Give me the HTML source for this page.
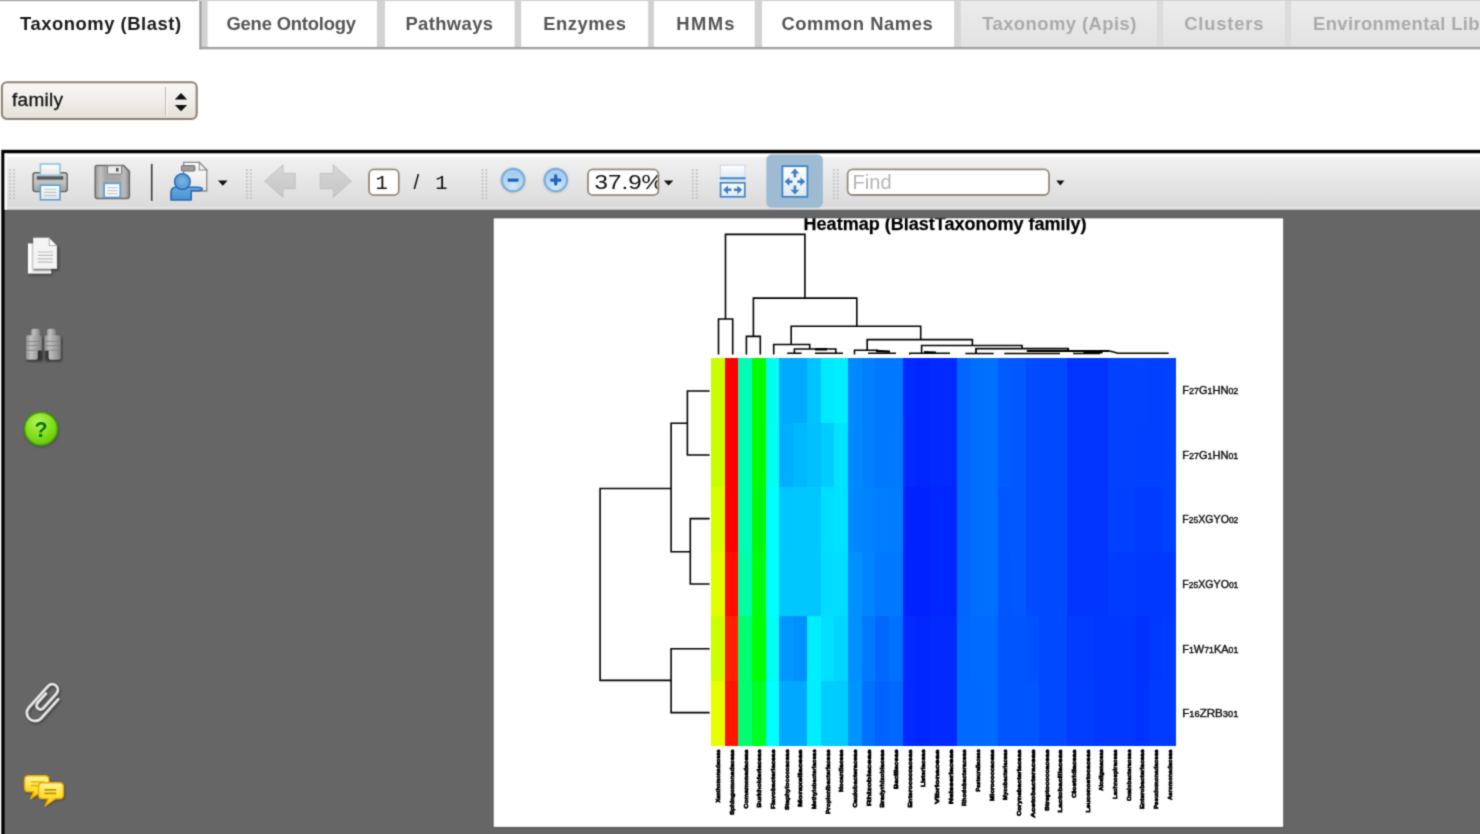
<!DOCTYPE html>
<html><head><meta charset="utf-8"><title>Heatmap</title>
<style>
html,body{margin:0;padding:0;background:#fff;width:1480px;height:834px;overflow:hidden;font-family:"Liberation Sans",sans-serif}
svg{display:block;overflow:visible}
#wrap{position:absolute;left:0;top:0;width:1480px;height:834px;overflow:hidden}
#soft{position:absolute;left:-30px;top:-30px;width:1540px;height:894px;background:#fff;filter:url(#softf)}
#inner{position:absolute;left:30px;top:30px;width:1480px;height:834px}
</style></head><body>
<svg width="0" height="0" style="position:absolute"><defs>
<filter id="softf" x="0" y="0" width="100%" height="100%" color-interpolation-filters="sRGB"><feConvolveMatrix order="3" kernelMatrix="1 4 1 4 16 4 1 4 1" divisor="36" edgeMode="duplicate" preserveAlpha="true"/></filter>
</defs></svg>
<div id="wrap"><div id="soft"><div id="inner">
<svg style="position:absolute;left:0;top:0" width="1480" height="52" viewBox="0 0 1480 52"><defs><linearGradient id="offg" x1="0" y1="0" x2="0" y2="1"><stop offset="0" stop-color="#ececec"/><stop offset="1" stop-color="#e2e2e2"/></linearGradient><linearGradient id="sepg" x1="0" y1="0" x2="1" y2="0"><stop offset="0" stop-color="#c6c6c6"/><stop offset="0.5" stop-color="#d6d6d6"/><stop offset="1" stop-color="#cbcbcb"/></linearGradient></defs><rect x="199.6" y="0" width="1290" height="47.2" fill="url(#sepg)"/><rect x="199.6" y="0" width="1290" height="47.2" fill="#d2d2d2"/><rect x="0.0" y="0" width="199.6" height="50" fill="#fff"/><rect x="207.6" y="0" width="169.3" height="47.2" fill="#fff"/><rect x="384.9" y="0" width="129.7" height="47.2" fill="#fff"/><rect x="521.2" y="0" width="126.9" height="47.2" fill="#fff"/><rect x="654.0" y="0" width="100.7" height="47.2" fill="#fff"/><rect x="761.9" y="0" width="192.4" height="47.2" fill="#fff"/><rect x="960.5" y="0" width="196.8" height="47.2" fill="url(#offg)"/><rect x="1162.7" y="0" width="122.3" height="47.2" fill="url(#offg)"/><rect x="1290.8" y="0" width="199.2" height="47.2" fill="url(#offg)"/><rect x="1157.3" y="1" width="5.4" height="46.2" fill="#dcdcdc"/><rect x="1285" y="1" width="5.8" height="46.2" fill="#dcdcdc"/><rect x="954.3" y="1" width="6.2" height="46.2" fill="#d6d6d6"/><rect x="199.6" y="46.9" width="1290" height="2.4" fill="#a2a2a2"/><rect x="199.4" y="0.5" width="2.1" height="48.8" fill="#9c9c9c"/><rect x="-5" y="-5" width="202" height="6.2" fill="#a6a6a6"/><rect x="197" y="-5" width="1290" height="6" fill="#d0d0d0"/><text x="20.0" y="29.6" font-family="Liberation Sans" font-weight="bold" font-size="18.4" fill="#1a1a1a" textLength="161.0" lengthAdjust="spacing">Taxonomy (Blast)</text><text x="226.4" y="29.6" font-family="Liberation Sans" font-weight="bold" font-size="18.4" fill="#555" textLength="129.7" lengthAdjust="spacing">Gene Ontology</text><text x="405.4" y="29.6" font-family="Liberation Sans" font-weight="bold" font-size="18.4" fill="#555" textLength="87.6" lengthAdjust="spacing">Pathways</text><text x="543.2" y="29.6" font-family="Liberation Sans" font-weight="bold" font-size="18.4" fill="#555" textLength="82.8" lengthAdjust="spacing">Enzymes</text><text x="676.2" y="29.6" font-family="Liberation Sans" font-weight="bold" font-size="18.4" fill="#555" textLength="58.4" lengthAdjust="spacing">HMMs</text><text x="781.4" y="29.6" font-family="Liberation Sans" font-weight="bold" font-size="18.4" fill="#555" textLength="151.3" lengthAdjust="spacing">Common Names</text><text x="982.2" y="29.6" font-family="Liberation Sans" font-weight="bold" font-size="18.4" fill="#ababab" textLength="154.1" lengthAdjust="spacing">Taxonomy (Apis)</text><text x="1184.2" y="29.6" font-family="Liberation Sans" font-weight="bold" font-size="18.4" fill="#ababab" textLength="79.2" lengthAdjust="spacing">Clusters</text><text x="1313.0" y="29.6" font-family="Liberation Sans" font-weight="bold" font-size="18.4" fill="#ababab" textLength="166.6" lengthAdjust="spacing">Environmental Lib</text></svg>
<svg style="position:absolute;left:0;top:0" width="1480" height="834" viewBox="0 0 1480 834"><defs>
<linearGradient id="tbg" x1="0" y1="0" x2="0" y2="1"><stop offset="0" stop-color="#ffffff"/><stop offset="0.055" stop-color="#ffffff"/><stop offset="0.075" stop-color="#f1f1f1"/><stop offset="0.5" stop-color="#e6e6e6"/><stop offset="0.94" stop-color="#dbdbdb"/><stop offset="0.96" stop-color="#e2e2e2"/><stop offset="1" stop-color="#e0e0e0"/></linearGradient>
<linearGradient id="selg" x1="0" y1="0" x2="0" y2="1"><stop offset="0" stop-color="#f9f8f6"/><stop offset="0.5" stop-color="#f1eeea"/><stop offset="1" stop-color="#e3dfd8"/></linearGradient>
<linearGradient id="prn" x1="0" y1="0" x2="0" y2="1"><stop offset="0" stop-color="#cfcfcf"/><stop offset="0.3" stop-color="#bcbcbc"/><stop offset="0.5" stop-color="#c2c2c2"/><stop offset="1" stop-color="#a0a0a0"/></linearGradient>
<linearGradient id="flp" x1="0" y1="0" x2="1" y2="0"><stop offset="0" stop-color="#9a9a9a"/><stop offset="0.15" stop-color="#c2c2c2"/><stop offset="0.3" stop-color="#a6a6a6"/><stop offset="0.7" stop-color="#a8a8a8"/><stop offset="0.85" stop-color="#bcbcbc"/><stop offset="1" stop-color="#8c8c8c"/></linearGradient>
<linearGradient id="pap" x1="0" y1="0" x2="0" y2="1"><stop offset="0" stop-color="#ffffff"/><stop offset="1" stop-color="#e4e4e4"/></linearGradient>
<radialGradient id="zb" cx="0.5" cy="0.78" r="0.75"><stop offset="0" stop-color="#d4eafa"/><stop offset="0.6" stop-color="#aed2f0"/><stop offset="1" stop-color="#94c0e8"/></radialGradient>
<linearGradient id="usr" x1="0" y1="0" x2="0" y2="1"><stop offset="0" stop-color="#6aa8dc"/><stop offset="1" stop-color="#4a8fd0"/></linearGradient>
<linearGradient id="bino" x1="0" y1="0" x2="1" y2="0"><stop offset="0" stop-color="#8c8c8c"/><stop offset="0.3" stop-color="#c0c0c0"/><stop offset="0.7" stop-color="#a0a0a0"/><stop offset="1" stop-color="#7e7e7e"/></linearGradient>
<radialGradient id="grn" cx="0.42" cy="0.3" r="0.75"><stop offset="0" stop-color="#b4f45c"/><stop offset="0.55" stop-color="#84e01c"/><stop offset="1" stop-color="#62c40c"/></radialGradient>
<linearGradient id="ylw" x1="0" y1="0" x2="0" y2="1"><stop offset="0" stop-color="#fff6a0"/><stop offset="0.5" stop-color="#ffe23c"/><stop offset="1" stop-color="#ffcf00"/></linearGradient>
<linearGradient id="arr" x1="0" y1="0" x2="0" y2="1"><stop offset="0" stop-color="#d6d6d6"/><stop offset="1" stop-color="#c6c6c6"/></linearGradient>
<linearGradient id="fw" x1="0" y1="0" x2="0" y2="1"><stop offset="0" stop-color="#ffffff"/><stop offset="1" stop-color="#dfe8f2"/></linearGradient>
<filter id="sh" x="-30%" y="-30%" width="160%" height="160%"><feGaussianBlur stdDeviation="1.1"/></filter>
</defs>
<rect x="1.9" y="82.2" width="194.8" height="36.8" rx="5" ry="5" fill="url(#selg)" stroke="#8d8475" stroke-width="2.1"/>
<rect x="165" y="87" width="1.2" height="28.4" fill="#c3bdb2"/><rect x="166.2" y="87" width="1.2" height="28.4" fill="#fbfaf8"/>
<path d="M174.8 99.4 L181 93 L187.2 99.4 Z" fill="#111"/><path d="M174.8 104.9 L187.2 104.9 L181 111.3 Z" fill="#111"/>
<text x="12" y="105.6" font-family="Liberation Sans" font-size="19" fill="#111" stroke="#111" stroke-width="0.3" textLength="51" lengthAdjust="spacing">family</text>
<rect x="1.3" y="149.8" width="1490" height="700" fill="#000"/>
<rect x="4.6" y="153.4" width="1490" height="700" fill="#666"/>
<rect x="4.6" y="153.4" width="1490" height="56.3" fill="url(#tbg)"/>
<rect x="4.6" y="153.4" width="2.4" height="56.3" fill="#fdfdfd" opacity="0.9"/>
<rect x="9.2" y="169.2" width="1.7" height="1.7" fill="#bdbdbd"/><rect x="13.1" y="169.2" width="1.7" height="1.7" fill="#bdbdbd"/><rect x="9.2" y="172.7" width="1.7" height="1.7" fill="#bdbdbd"/><rect x="13.1" y="172.7" width="1.7" height="1.7" fill="#bdbdbd"/><rect x="9.2" y="176.2" width="1.7" height="1.7" fill="#bdbdbd"/><rect x="13.1" y="176.2" width="1.7" height="1.7" fill="#bdbdbd"/><rect x="9.2" y="179.7" width="1.7" height="1.7" fill="#bdbdbd"/><rect x="13.1" y="179.7" width="1.7" height="1.7" fill="#bdbdbd"/><rect x="9.2" y="183.2" width="1.7" height="1.7" fill="#bdbdbd"/><rect x="13.1" y="183.2" width="1.7" height="1.7" fill="#bdbdbd"/><rect x="9.2" y="186.7" width="1.7" height="1.7" fill="#bdbdbd"/><rect x="13.1" y="186.7" width="1.7" height="1.7" fill="#bdbdbd"/><rect x="9.2" y="190.2" width="1.7" height="1.7" fill="#bdbdbd"/><rect x="13.1" y="190.2" width="1.7" height="1.7" fill="#bdbdbd"/><rect x="9.2" y="193.7" width="1.7" height="1.7" fill="#bdbdbd"/><rect x="13.1" y="193.7" width="1.7" height="1.7" fill="#bdbdbd"/><rect x="9.2" y="197.2" width="1.7" height="1.7" fill="#bdbdbd"/><rect x="13.1" y="197.2" width="1.7" height="1.7" fill="#bdbdbd"/>
<rect x="246.0" y="169.2" width="1.7" height="1.7" fill="#bdbdbd"/><rect x="249.9" y="169.2" width="1.7" height="1.7" fill="#bdbdbd"/><rect x="246.0" y="172.7" width="1.7" height="1.7" fill="#bdbdbd"/><rect x="249.9" y="172.7" width="1.7" height="1.7" fill="#bdbdbd"/><rect x="246.0" y="176.2" width="1.7" height="1.7" fill="#bdbdbd"/><rect x="249.9" y="176.2" width="1.7" height="1.7" fill="#bdbdbd"/><rect x="246.0" y="179.7" width="1.7" height="1.7" fill="#bdbdbd"/><rect x="249.9" y="179.7" width="1.7" height="1.7" fill="#bdbdbd"/><rect x="246.0" y="183.2" width="1.7" height="1.7" fill="#bdbdbd"/><rect x="249.9" y="183.2" width="1.7" height="1.7" fill="#bdbdbd"/><rect x="246.0" y="186.7" width="1.7" height="1.7" fill="#bdbdbd"/><rect x="249.9" y="186.7" width="1.7" height="1.7" fill="#bdbdbd"/><rect x="246.0" y="190.2" width="1.7" height="1.7" fill="#bdbdbd"/><rect x="249.9" y="190.2" width="1.7" height="1.7" fill="#bdbdbd"/><rect x="246.0" y="193.7" width="1.7" height="1.7" fill="#bdbdbd"/><rect x="249.9" y="193.7" width="1.7" height="1.7" fill="#bdbdbd"/><rect x="246.0" y="197.2" width="1.7" height="1.7" fill="#bdbdbd"/><rect x="249.9" y="197.2" width="1.7" height="1.7" fill="#bdbdbd"/>
<rect x="481.6" y="169.2" width="1.7" height="1.7" fill="#bdbdbd"/><rect x="485.5" y="169.2" width="1.7" height="1.7" fill="#bdbdbd"/><rect x="481.6" y="172.7" width="1.7" height="1.7" fill="#bdbdbd"/><rect x="485.5" y="172.7" width="1.7" height="1.7" fill="#bdbdbd"/><rect x="481.6" y="176.2" width="1.7" height="1.7" fill="#bdbdbd"/><rect x="485.5" y="176.2" width="1.7" height="1.7" fill="#bdbdbd"/><rect x="481.6" y="179.7" width="1.7" height="1.7" fill="#bdbdbd"/><rect x="485.5" y="179.7" width="1.7" height="1.7" fill="#bdbdbd"/><rect x="481.6" y="183.2" width="1.7" height="1.7" fill="#bdbdbd"/><rect x="485.5" y="183.2" width="1.7" height="1.7" fill="#bdbdbd"/><rect x="481.6" y="186.7" width="1.7" height="1.7" fill="#bdbdbd"/><rect x="485.5" y="186.7" width="1.7" height="1.7" fill="#bdbdbd"/><rect x="481.6" y="190.2" width="1.7" height="1.7" fill="#bdbdbd"/><rect x="485.5" y="190.2" width="1.7" height="1.7" fill="#bdbdbd"/><rect x="481.6" y="193.7" width="1.7" height="1.7" fill="#bdbdbd"/><rect x="485.5" y="193.7" width="1.7" height="1.7" fill="#bdbdbd"/><rect x="481.6" y="197.2" width="1.7" height="1.7" fill="#bdbdbd"/><rect x="485.5" y="197.2" width="1.7" height="1.7" fill="#bdbdbd"/>
<rect x="692.0" y="169.2" width="1.7" height="1.7" fill="#bdbdbd"/><rect x="695.9" y="169.2" width="1.7" height="1.7" fill="#bdbdbd"/><rect x="692.0" y="172.7" width="1.7" height="1.7" fill="#bdbdbd"/><rect x="695.9" y="172.7" width="1.7" height="1.7" fill="#bdbdbd"/><rect x="692.0" y="176.2" width="1.7" height="1.7" fill="#bdbdbd"/><rect x="695.9" y="176.2" width="1.7" height="1.7" fill="#bdbdbd"/><rect x="692.0" y="179.7" width="1.7" height="1.7" fill="#bdbdbd"/><rect x="695.9" y="179.7" width="1.7" height="1.7" fill="#bdbdbd"/><rect x="692.0" y="183.2" width="1.7" height="1.7" fill="#bdbdbd"/><rect x="695.9" y="183.2" width="1.7" height="1.7" fill="#bdbdbd"/><rect x="692.0" y="186.7" width="1.7" height="1.7" fill="#bdbdbd"/><rect x="695.9" y="186.7" width="1.7" height="1.7" fill="#bdbdbd"/><rect x="692.0" y="190.2" width="1.7" height="1.7" fill="#bdbdbd"/><rect x="695.9" y="190.2" width="1.7" height="1.7" fill="#bdbdbd"/><rect x="692.0" y="193.7" width="1.7" height="1.7" fill="#bdbdbd"/><rect x="695.9" y="193.7" width="1.7" height="1.7" fill="#bdbdbd"/><rect x="692.0" y="197.2" width="1.7" height="1.7" fill="#bdbdbd"/><rect x="695.9" y="197.2" width="1.7" height="1.7" fill="#bdbdbd"/>
<rect x="833.0" y="169.2" width="1.7" height="1.7" fill="#bdbdbd"/><rect x="836.9" y="169.2" width="1.7" height="1.7" fill="#bdbdbd"/><rect x="833.0" y="172.7" width="1.7" height="1.7" fill="#bdbdbd"/><rect x="836.9" y="172.7" width="1.7" height="1.7" fill="#bdbdbd"/><rect x="833.0" y="176.2" width="1.7" height="1.7" fill="#bdbdbd"/><rect x="836.9" y="176.2" width="1.7" height="1.7" fill="#bdbdbd"/><rect x="833.0" y="179.7" width="1.7" height="1.7" fill="#bdbdbd"/><rect x="836.9" y="179.7" width="1.7" height="1.7" fill="#bdbdbd"/><rect x="833.0" y="183.2" width="1.7" height="1.7" fill="#bdbdbd"/><rect x="836.9" y="183.2" width="1.7" height="1.7" fill="#bdbdbd"/><rect x="833.0" y="186.7" width="1.7" height="1.7" fill="#bdbdbd"/><rect x="836.9" y="186.7" width="1.7" height="1.7" fill="#bdbdbd"/><rect x="833.0" y="190.2" width="1.7" height="1.7" fill="#bdbdbd"/><rect x="836.9" y="190.2" width="1.7" height="1.7" fill="#bdbdbd"/><rect x="833.0" y="193.7" width="1.7" height="1.7" fill="#bdbdbd"/><rect x="836.9" y="193.7" width="1.7" height="1.7" fill="#bdbdbd"/><rect x="833.0" y="197.2" width="1.7" height="1.7" fill="#bdbdbd"/><rect x="836.9" y="197.2" width="1.7" height="1.7" fill="#bdbdbd"/>
<rect x="33" y="172.8" width="34.2" height="18.8" rx="2.5" fill="url(#prn)" stroke="#646464" stroke-width="1.4"/>
<rect x="37" y="176.2" width="26.2" height="3.4" fill="#585858"/>
<rect x="40.4" y="164" width="19.6" height="11.4" fill="url(#pap)" stroke="#8cc6de" stroke-width="1.6"/>
<rect x="40.4" y="185.2" width="19.6" height="14.6" fill="url(#pap)" stroke="#5aa2d2" stroke-width="1.6"/>
<path d="M44 189.2H56.4M44 192.4H56.4M44 195.6H56.4" stroke="#b8c4cc" stroke-width="1.1"/>
<path d="M97 165.6 H123.6 L129.4 171.4 V196 Q129.4 198.4 127 198.4 H97 Q95.2 198.4 95.2 196 V167.4 Q95.2 165.6 97 165.6Z" fill="url(#flp)" stroke="#6c6c6c" stroke-width="1.5"/>
<rect x="107.6" y="165.8" width="14" height="8.2" rx="1" fill="#ececec" stroke="#7c7c7c" stroke-width="1"/>
<rect x="116" y="168" width="2.6" height="3.6" fill="#555"/>
<rect x="104.2" y="183.4" width="16" height="14" fill="#fbfbfb" stroke="#5c9fd6" stroke-width="1.6"/>
<path d="M107 187.6H117.6M107 190.6H117.6M107 193.6H117.6" stroke="#c4ccd2" stroke-width="1.1"/>
<rect x="150.9" y="163.8" width="1.8" height="37.2" rx="0.9" fill="#404040"/><rect x="152.8" y="165" width="1" height="35" fill="#f6f6f6" opacity="0.7"/>
<path d="M183.6 162.4 H199.2 L206.8 170 V191 H183.6Z" fill="url(#pap)" stroke="#8a8a8a" stroke-width="1.3"/>
<path d="M199.2 162.4 V170 H206.8Z" fill="#f4f4f4" stroke="#8a8a8a" stroke-width="1.1"/>
<rect x="181.4" y="165.6" width="13.6" height="5.4" rx="1" fill="#9c9c9c" stroke="#707070" stroke-width="1"/>
<path d="M171 200 V192.4 Q171 187.4 176 187.2 H197.6 Q202.2 187.2 202.2 189 Q202.2 190.8 197.6 190.8 H191.2 V200Z" fill="url(#usr)" stroke="#1f6cb8" stroke-width="1.6" stroke-linejoin="round"/>
<circle cx="182.4" cy="181.6" r="7.8" fill="#62a2da" stroke="#226fbc" stroke-width="1.6"/>
<circle cx="182.4" cy="181" r="3.6" fill="#78b2e2" opacity="0.8"/>
<path d="M218 180.6 H227.6 L222.8 185.8Z" fill="#111"/>
<path d="M264.8 181.2 L283 164.8 V173.4 H295.2 V188.8 H283 V197.6Z" fill="url(#arr)" stroke="#c2c2c2" stroke-width="1"/>
<path d="M351.2 181.2 L333.2 164.8 V173.4 H320.2 V188.8 H333.2 V197.6Z" fill="url(#arr)" stroke="#c2c2c2" stroke-width="1"/>
<rect x="369" y="169.4" width="29.8" height="25.8" rx="5" fill="#fff" stroke="#958b7c" stroke-width="1.8"/>
<text x="375.6" y="189" font-family="Liberation Mono" font-size="20.5" fill="#111">1</text>
<text x="413.4" y="189" font-family="Liberation Sans" font-size="20.5" fill="#111">/</text>
<text x="435.2" y="189" font-family="Liberation Mono" font-size="20.5" fill="#111">1</text>
<circle cx="513.1" cy="180.6" r="12.6" fill="#b9b9b9" opacity="0.7" filter="url(#sh)"/>
<circle cx="513.1" cy="180" r="11.3" fill="url(#zb)" stroke="#7aaddc" stroke-width="1.9"/>
<circle cx="513.1" cy="180" r="8.6" fill="none" stroke="#c6e0f6" stroke-width="1" opacity="0.8"/>
<rect x="507.7" y="178.4" width="10.8" height="3.3" rx="0.8" fill="#1c64c2"/>
<circle cx="555.8" cy="180.6" r="12.6" fill="#b9b9b9" opacity="0.7" filter="url(#sh)"/>
<circle cx="555.8" cy="180" r="11.3" fill="url(#zb)" stroke="#7aaddc" stroke-width="1.9"/>
<circle cx="555.8" cy="180" r="8.6" fill="none" stroke="#c6e0f6" stroke-width="1" opacity="0.8"/>
<rect x="550.4" y="178.4" width="10.8" height="3.3" rx="0.8" fill="#1c64c2"/>
<rect x="554.1" y="174.6" width="3.3" height="10.8" rx="0.8" fill="#1c64c2"/>
<clipPath id="zc"><rect x="588" y="169" width="69.6" height="27"/></clipPath>
<rect x="588" y="169.4" width="70.4" height="25.8" rx="5" fill="#fff" stroke="#958b7c" stroke-width="1.8"/>
<g clip-path="url(#zc)"><text transform="translate(594.6 189) scale(1.15 1)" font-family="Liberation Sans" font-size="21" fill="#111">37.9%</text></g>
<path d="M663.8 180.4 H673.4 L668.6 185.6Z" fill="#111"/>
<rect x="720.4" y="165.2" width="24.6" height="13" fill="url(#fw)" stroke="#c4d8ec" stroke-width="1"/>
<rect x="719.8" y="177.2" width="25.8" height="2.2" fill="#4a90d2"/>
<rect x="720.6" y="182.8" width="24.2" height="14" fill="url(#fw)" stroke="#3f86cc" stroke-width="1.7"/>
<path d="M723.2 189.8 L728 185.4 V188.5 H731.4 V191.1 H728 V194.2Z" fill="#3a80c8"/><path d="M742.2 189.8 L737.4 185.4 V188.5 H734 V191.1 H737.4 V194.2Z" fill="#3a80c8"/>
<rect x="766.3" y="154.4" width="56.6" height="53.4" rx="5.5" fill="#9dbcd4"/>
<rect x="782.4" y="166.2" width="25" height="30.6" fill="url(#fw)" stroke="#3c82ca" stroke-width="1.8"/>
<path d="M794.9 168.6 L799.3 173.4 H796.2 V177.6 H793.6 V173.4 H790.5Z" fill="#3a80c8"/>
<path d="M794.9 194.6 L799.3 189.8 H796.2 V185.6 H793.6 V189.8 H790.5Z" fill="#3a80c8"/>
<path d="M784.6 181.6 L789.4 177.2 V180.3 H792.4 V182.9 H789.4 V186Z" fill="#3a80c8"/>
<path d="M805.2 181.6 L800.4 177.2 V180.3 H797.4 V182.9 H800.4 V186Z" fill="#3a80c8"/>
<rect x="847.6" y="169.4" width="201.4" height="25.6" rx="5" fill="#fff" stroke="#958b7c" stroke-width="1.8"/>
<text x="852.6" y="189.4" font-family="Liberation Sans" font-size="20" fill="#b4b4b4">Find</text>
<path d="M1056.2 180.6 H1064.4 L1060.3 185.4Z" fill="#111"/>
<rect x="28.6" y="244.6" width="24" height="31" fill="#2e2e2e" opacity="0.55" filter="url(#sh)"/>
<rect x="27.9" y="243.4" width="23.4" height="30.2" fill="#fcfcfc"/>
<path d="M33 239 H50 L58.4 247 V270.4 H33Z" fill="#1e1e1e" opacity="0.7" filter="url(#sh)"/>
<path d="M33.4 238 H49.2 L56.8 245.6 V268.6 H33.4Z" fill="#f4f4f4" stroke="#fff" stroke-width="0.6"/>
<path d="M49.2 238 V245.6 H56.8Z" fill="#fdfdfd" stroke="#9a9a9a" stroke-width="0.8"/>
<path d="M37.8 252H53M37.8 255.4H53M37.8 258.8H53M37.8 262.2H53" stroke="#bdbdbd" stroke-width="1.2"/>
<g opacity="0.5" filter="url(#sh)"><rect x="26.4" y="336.4" width="16.4" height="25" rx="2"/><rect x="45.2" y="336.4" width="16.6" height="25" rx="2"/></g>
<rect x="30.8" y="328.8" width="9.2" height="8" rx="3" fill="url(#bino)"/>
<rect x="46.8" y="328.8" width="9.2" height="8" rx="3" fill="url(#bino)"/>
<path d="M25.8 337 Q25.8 335.2 27.6 335.2 H40.2 Q42 335.2 42 337 V350.4 H37.8 V358 Q37.8 359.8 36 359.8 H27.6 Q25.8 359.8 25.8 358Z" fill="url(#bino)"/>
<path d="M44.4 337 Q44.4 335.2 46.2 335.2 H59 Q60.8 335.2 60.8 337 V358 Q60.8 359.8 59 359.8 H50.4 Q48.6 359.8 48.6 358 V350.4 H44.4Z" fill="url(#bino)"/>
<path d="M26 341.4H42M26 345.6H42M26 350.2H38M44.6 341.4H60.6M44.6 345.6H60.6M48.6 350.2H60.6" stroke="#858585" stroke-width="1" opacity="0.9"/>
<circle cx="41.4" cy="430" r="17.4" fill="#333" opacity="0.45" filter="url(#sh)"/>
<circle cx="41" cy="428.8" r="16.4" fill="url(#grn)" stroke="#44a00c" stroke-width="1.6"/>
<text x="41" y="436.6" text-anchor="middle" font-family="Liberation Sans" font-weight="bold" font-size="21.5" fill="#0c720c">?</text>
<g transform="translate(45.2 704.2) rotate(-48)"><path d="M12 8.2 H-13.6 A8.2 8.2 0 0 1 -13.6 -8.2 H15 A5.6 5.6 0 0 1 15 3 H-4.5 A3.9 3.9 0 0 1 -4.5 -4.8 H8" fill="none" stroke="#2a2a2a" stroke-width="3.4" stroke-linecap="round" opacity="0.6" filter="url(#sh)"/></g>
<g transform="translate(44.2 702.8) rotate(-48)"><path d="M12 8.2 H-13.6 A8.2 8.2 0 0 1 -13.6 -8.2 H15 A5.6 5.6 0 0 1 15 3 H-4.5 A3.9 3.9 0 0 1 -4.5 -4.8 H8" fill="none" stroke="#d2d2d2" stroke-width="3" stroke-linecap="round"/><path d="M12 8.2 H-13.6 A8.2 8.2 0 0 1 -13.6 -8.2 H15 A5.6 5.6 0 0 1 15 3 H-4.5 A3.9 3.9 0 0 1 -4.5 -4.8 H8" fill="none" stroke="#f2f2f2" stroke-width="1" stroke-linecap="round" transform="translate(0 -0.5)"/></g>
<g opacity="0.45" filter="url(#sh)"><path d="M29.4 777.0 H46.0 Q50.0 777.0 50.0 781.0 V789.0 Q50.0 793.0 46.0 793.0 H41.6 L31.6 800.0 L34.6 793.0 H29.4 Q25.4 793.0 25.4 789.0 V781.0 Q25.4 777.0 29.4 777.0Z"/><path d="M43.4 784.0 H60.4 Q64.4 784.0 64.4 788.0 V796.0 Q64.4 800.0 60.4 800.0 H56.0 L46.0 807.2 L49.0 800.0 H43.4 Q39.4 800.0 39.4 796.0 V788.0 Q39.4 784.0 43.4 784.0Z"/></g>
<path d="M28.6 775.8 H45.0 Q49.0 775.8 49.0 779.8 V787.8 Q49.0 791.8 45.0 791.8 H40.8 L30.8 798.6 L33.8 791.8 H28.6 Q24.6 791.8 24.6 787.8 V779.8 Q24.6 775.8 28.6 775.8Z" fill="url(#ylw)" stroke="#eda800" stroke-width="1.5" stroke-linejoin="round"/>
<path d="M31 782H44M31 785.6H44" stroke="#d8a400" stroke-width="1.6" opacity="0.8"/>
<path d="M42.6 782.8 H59.4 Q63.4 782.8 63.4 786.8 V794.8 Q63.4 798.8 59.4 798.8 H55.2 L45.2 806.0 L48.2 798.8 H42.6 Q38.6 798.8 38.6 794.8 V786.8 Q38.6 782.8 42.6 782.8Z" fill="url(#ylw)" stroke="#eda800" stroke-width="1.5" stroke-linejoin="round"/>
<path d="M44.4 789.8H56.2M44.4 793.4H56.2" stroke="#c48e00" stroke-width="1.8"/></svg>
<svg style="position:absolute;left:0;top:0" width="1480" height="834" viewBox="0 0 1480 834">
<defs><filter id="hb" x="-2%" y="-2%" width="104%" height="104%"><feGaussianBlur stdDeviation="0.55"/></filter><clipPath id="pg"><rect x="493.7" y="218.3" width="789.5" height="608.6"/></clipPath></defs>
<rect x="492.7" y="217.3" width="791.5" height="610.6" fill="#595959"/>
<rect x="493.7" y="218.3" width="789.5" height="608.6" fill="#fff"/>
<g clip-path="url(#pg)">
<g shape-rendering="crispEdges" filter="url(#hb)">
<rect x="711.10" y="358.00" width="13.98" height="64.88" fill="#c8ff00"/>
<rect x="724.78" y="358.00" width="13.98" height="64.88" fill="#ff0000"/>
<rect x="738.45" y="358.00" width="13.98" height="64.88" fill="#00ffb4"/>
<rect x="752.13" y="358.00" width="13.98" height="64.88" fill="#00fc00"/>
<rect x="765.81" y="358.00" width="13.98" height="64.88" fill="#00fff0"/>
<rect x="779.48" y="358.00" width="13.98" height="64.88" fill="#00aaff"/>
<rect x="793.16" y="358.00" width="13.98" height="64.88" fill="#00aaff"/>
<rect x="806.84" y="358.00" width="13.98" height="64.88" fill="#00c4ff"/>
<rect x="820.51" y="358.00" width="13.98" height="64.88" fill="#00eaff"/>
<rect x="834.19" y="358.00" width="13.98" height="64.88" fill="#00eeff"/>
<rect x="847.86" y="358.00" width="13.98" height="64.88" fill="#0088ff"/>
<rect x="861.54" y="358.00" width="13.98" height="64.88" fill="#0080ff"/>
<rect x="875.22" y="358.00" width="13.98" height="64.88" fill="#0078ff"/>
<rect x="888.89" y="358.00" width="13.98" height="64.88" fill="#0078ff"/>
<rect x="902.57" y="358.00" width="13.98" height="64.88" fill="#002aff"/>
<rect x="916.25" y="358.00" width="13.98" height="64.88" fill="#0026ff"/>
<rect x="929.92" y="358.00" width="13.98" height="64.88" fill="#002aff"/>
<rect x="943.60" y="358.00" width="13.98" height="64.88" fill="#002aff"/>
<rect x="957.28" y="358.00" width="13.98" height="64.88" fill="#0066ff"/>
<rect x="970.95" y="358.00" width="13.98" height="64.88" fill="#006eff"/>
<rect x="984.63" y="358.00" width="13.98" height="64.88" fill="#0070ff"/>
<rect x="998.31" y="358.00" width="13.98" height="64.88" fill="#005bff"/>
<rect x="1011.98" y="358.00" width="13.98" height="64.88" fill="#0059ff"/>
<rect x="1025.66" y="358.00" width="13.98" height="64.88" fill="#004bff"/>
<rect x="1039.34" y="358.00" width="13.98" height="64.88" fill="#0049ff"/>
<rect x="1053.01" y="358.00" width="13.98" height="64.88" fill="#0049ff"/>
<rect x="1066.69" y="358.00" width="13.98" height="64.88" fill="#0035ff"/>
<rect x="1080.36" y="358.00" width="13.98" height="64.88" fill="#0035ff"/>
<rect x="1094.04" y="358.00" width="13.98" height="64.88" fill="#0035ff"/>
<rect x="1107.72" y="358.00" width="13.98" height="64.88" fill="#0043ff"/>
<rect x="1121.39" y="358.00" width="13.98" height="64.88" fill="#0043ff"/>
<rect x="1135.07" y="358.00" width="13.98" height="64.88" fill="#0043ff"/>
<rect x="1148.75" y="358.00" width="13.98" height="64.88" fill="#0041ff"/>
<rect x="1162.42" y="358.00" width="13.98" height="64.88" fill="#0043ff"/>
<rect x="711.10" y="422.58" width="13.98" height="64.88" fill="#c8ff00"/>
<rect x="724.78" y="422.58" width="13.98" height="64.88" fill="#ff0000"/>
<rect x="738.45" y="422.58" width="13.98" height="64.88" fill="#00ffb4"/>
<rect x="752.13" y="422.58" width="13.98" height="64.88" fill="#00fc00"/>
<rect x="765.81" y="422.58" width="13.98" height="64.88" fill="#00fff0"/>
<rect x="779.48" y="422.58" width="13.98" height="64.88" fill="#00aeff"/>
<rect x="793.16" y="422.58" width="13.98" height="64.88" fill="#00b8ff"/>
<rect x="806.84" y="422.58" width="13.98" height="64.88" fill="#00c0ff"/>
<rect x="820.51" y="422.58" width="13.98" height="64.88" fill="#00ccff"/>
<rect x="834.19" y="422.58" width="13.98" height="64.88" fill="#00e4ff"/>
<rect x="847.86" y="422.58" width="13.98" height="64.88" fill="#0088ff"/>
<rect x="861.54" y="422.58" width="13.98" height="64.88" fill="#0080ff"/>
<rect x="875.22" y="422.58" width="13.98" height="64.88" fill="#0078ff"/>
<rect x="888.89" y="422.58" width="13.98" height="64.88" fill="#007aff"/>
<rect x="902.57" y="422.58" width="13.98" height="64.88" fill="#002aff"/>
<rect x="916.25" y="422.58" width="13.98" height="64.88" fill="#0026ff"/>
<rect x="929.92" y="422.58" width="13.98" height="64.88" fill="#002aff"/>
<rect x="943.60" y="422.58" width="13.98" height="64.88" fill="#002aff"/>
<rect x="957.28" y="422.58" width="13.98" height="64.88" fill="#0066ff"/>
<rect x="970.95" y="422.58" width="13.98" height="64.88" fill="#006eff"/>
<rect x="984.63" y="422.58" width="13.98" height="64.88" fill="#0070ff"/>
<rect x="998.31" y="422.58" width="13.98" height="64.88" fill="#005bff"/>
<rect x="1011.98" y="422.58" width="13.98" height="64.88" fill="#0059ff"/>
<rect x="1025.66" y="422.58" width="13.98" height="64.88" fill="#004bff"/>
<rect x="1039.34" y="422.58" width="13.98" height="64.88" fill="#0049ff"/>
<rect x="1053.01" y="422.58" width="13.98" height="64.88" fill="#0049ff"/>
<rect x="1066.69" y="422.58" width="13.98" height="64.88" fill="#0035ff"/>
<rect x="1080.36" y="422.58" width="13.98" height="64.88" fill="#0035ff"/>
<rect x="1094.04" y="422.58" width="13.98" height="64.88" fill="#0035ff"/>
<rect x="1107.72" y="422.58" width="13.98" height="64.88" fill="#0043ff"/>
<rect x="1121.39" y="422.58" width="13.98" height="64.88" fill="#0043ff"/>
<rect x="1135.07" y="422.58" width="13.98" height="64.88" fill="#003fff"/>
<rect x="1148.75" y="422.58" width="13.98" height="64.88" fill="#003fff"/>
<rect x="1162.42" y="422.58" width="13.98" height="64.88" fill="#0043ff"/>
<rect x="711.10" y="487.17" width="13.98" height="64.88" fill="#d8ff00"/>
<rect x="724.78" y="487.17" width="13.98" height="64.88" fill="#ff0400"/>
<rect x="738.45" y="487.17" width="13.98" height="64.88" fill="#00ffb4"/>
<rect x="752.13" y="487.17" width="13.98" height="64.88" fill="#00f810"/>
<rect x="765.81" y="487.17" width="13.98" height="64.88" fill="#00ffff"/>
<rect x="779.48" y="487.17" width="13.98" height="64.88" fill="#00c6ff"/>
<rect x="793.16" y="487.17" width="13.98" height="64.88" fill="#00c8ff"/>
<rect x="806.84" y="487.17" width="13.98" height="64.88" fill="#00c8ff"/>
<rect x="820.51" y="487.17" width="13.98" height="64.88" fill="#00deff"/>
<rect x="834.19" y="487.17" width="13.98" height="64.88" fill="#00e2ff"/>
<rect x="847.86" y="487.17" width="13.98" height="64.88" fill="#0088ff"/>
<rect x="861.54" y="487.17" width="13.98" height="64.88" fill="#0082ff"/>
<rect x="875.22" y="487.17" width="13.98" height="64.88" fill="#007eff"/>
<rect x="888.89" y="487.17" width="13.98" height="64.88" fill="#007cff"/>
<rect x="902.57" y="487.17" width="13.98" height="64.88" fill="#0022ff"/>
<rect x="916.25" y="487.17" width="13.98" height="64.88" fill="#0022ff"/>
<rect x="929.92" y="487.17" width="13.98" height="64.88" fill="#0026ff"/>
<rect x="943.60" y="487.17" width="13.98" height="64.88" fill="#0026ff"/>
<rect x="957.28" y="487.17" width="13.98" height="64.88" fill="#0066ff"/>
<rect x="970.95" y="487.17" width="13.98" height="64.88" fill="#006eff"/>
<rect x="984.63" y="487.17" width="13.98" height="64.88" fill="#0070ff"/>
<rect x="998.31" y="487.17" width="13.98" height="64.88" fill="#0057ff"/>
<rect x="1011.98" y="487.17" width="13.98" height="64.88" fill="#0059ff"/>
<rect x="1025.66" y="487.17" width="13.98" height="64.88" fill="#004bff"/>
<rect x="1039.34" y="487.17" width="13.98" height="64.88" fill="#0049ff"/>
<rect x="1053.01" y="487.17" width="13.98" height="64.88" fill="#0049ff"/>
<rect x="1066.69" y="487.17" width="13.98" height="64.88" fill="#0035ff"/>
<rect x="1080.36" y="487.17" width="13.98" height="64.88" fill="#0035ff"/>
<rect x="1094.04" y="487.17" width="13.98" height="64.88" fill="#0035ff"/>
<rect x="1107.72" y="487.17" width="13.98" height="64.88" fill="#003fff"/>
<rect x="1121.39" y="487.17" width="13.98" height="64.88" fill="#003fff"/>
<rect x="1135.07" y="487.17" width="13.98" height="64.88" fill="#003bff"/>
<rect x="1148.75" y="487.17" width="13.98" height="64.88" fill="#003bff"/>
<rect x="1162.42" y="487.17" width="13.98" height="64.88" fill="#003fff"/>
<rect x="711.10" y="551.75" width="13.98" height="64.88" fill="#e0ff00"/>
<rect x="724.78" y="551.75" width="13.98" height="64.88" fill="#ff1000"/>
<rect x="738.45" y="551.75" width="13.98" height="64.88" fill="#00ffa4"/>
<rect x="752.13" y="551.75" width="13.98" height="64.88" fill="#00fc10"/>
<rect x="765.81" y="551.75" width="13.98" height="64.88" fill="#00ffff"/>
<rect x="779.48" y="551.75" width="13.98" height="64.88" fill="#00c8ff"/>
<rect x="793.16" y="551.75" width="13.98" height="64.88" fill="#00c8ff"/>
<rect x="806.84" y="551.75" width="13.98" height="64.88" fill="#00c8ff"/>
<rect x="820.51" y="551.75" width="13.98" height="64.88" fill="#00dcff"/>
<rect x="834.19" y="551.75" width="13.98" height="64.88" fill="#00deff"/>
<rect x="847.86" y="551.75" width="13.98" height="64.88" fill="#0090ff"/>
<rect x="861.54" y="551.75" width="13.98" height="64.88" fill="#0084ff"/>
<rect x="875.22" y="551.75" width="13.98" height="64.88" fill="#0078ff"/>
<rect x="888.89" y="551.75" width="13.98" height="64.88" fill="#0078ff"/>
<rect x="902.57" y="551.75" width="13.98" height="64.88" fill="#0022ff"/>
<rect x="916.25" y="551.75" width="13.98" height="64.88" fill="#0022ff"/>
<rect x="929.92" y="551.75" width="13.98" height="64.88" fill="#0026ff"/>
<rect x="943.60" y="551.75" width="13.98" height="64.88" fill="#0026ff"/>
<rect x="957.28" y="551.75" width="13.98" height="64.88" fill="#0066ff"/>
<rect x="970.95" y="551.75" width="13.98" height="64.88" fill="#006eff"/>
<rect x="984.63" y="551.75" width="13.98" height="64.88" fill="#0070ff"/>
<rect x="998.31" y="551.75" width="13.98" height="64.88" fill="#0055ff"/>
<rect x="1011.98" y="551.75" width="13.98" height="64.88" fill="#0059ff"/>
<rect x="1025.66" y="551.75" width="13.98" height="64.88" fill="#004bff"/>
<rect x="1039.34" y="551.75" width="13.98" height="64.88" fill="#0049ff"/>
<rect x="1053.01" y="551.75" width="13.98" height="64.88" fill="#0049ff"/>
<rect x="1066.69" y="551.75" width="13.98" height="64.88" fill="#0035ff"/>
<rect x="1080.36" y="551.75" width="13.98" height="64.88" fill="#0035ff"/>
<rect x="1094.04" y="551.75" width="13.98" height="64.88" fill="#0035ff"/>
<rect x="1107.72" y="551.75" width="13.98" height="64.88" fill="#003bff"/>
<rect x="1121.39" y="551.75" width="13.98" height="64.88" fill="#003bff"/>
<rect x="1135.07" y="551.75" width="13.98" height="64.88" fill="#0037ff"/>
<rect x="1148.75" y="551.75" width="13.98" height="64.88" fill="#0037ff"/>
<rect x="1162.42" y="551.75" width="13.98" height="64.88" fill="#0039ff"/>
<rect x="711.10" y="616.33" width="13.98" height="64.88" fill="#ccff00"/>
<rect x="724.78" y="616.33" width="13.98" height="64.88" fill="#ff2000"/>
<rect x="738.45" y="616.33" width="13.98" height="64.88" fill="#00ff70"/>
<rect x="752.13" y="616.33" width="13.98" height="64.88" fill="#00ff00"/>
<rect x="765.81" y="616.33" width="13.98" height="64.88" fill="#00fff0"/>
<rect x="779.48" y="616.33" width="13.98" height="64.88" fill="#0098ff"/>
<rect x="793.16" y="616.33" width="13.98" height="64.88" fill="#0090ff"/>
<rect x="806.84" y="616.33" width="13.98" height="64.88" fill="#00eeff"/>
<rect x="820.51" y="616.33" width="13.98" height="64.88" fill="#00e0ff"/>
<rect x="834.19" y="616.33" width="13.98" height="64.88" fill="#00d4ff"/>
<rect x="847.86" y="616.33" width="13.98" height="64.88" fill="#0090ff"/>
<rect x="861.54" y="616.33" width="13.98" height="64.88" fill="#0078ff"/>
<rect x="875.22" y="616.33" width="13.98" height="64.88" fill="#0068ff"/>
<rect x="888.89" y="616.33" width="13.98" height="64.88" fill="#0070ff"/>
<rect x="902.57" y="616.33" width="13.98" height="64.88" fill="#002aff"/>
<rect x="916.25" y="616.33" width="13.98" height="64.88" fill="#0028ff"/>
<rect x="929.92" y="616.33" width="13.98" height="64.88" fill="#002aff"/>
<rect x="943.60" y="616.33" width="13.98" height="64.88" fill="#002aff"/>
<rect x="957.28" y="616.33" width="13.98" height="64.88" fill="#0068ff"/>
<rect x="970.95" y="616.33" width="13.98" height="64.88" fill="#006cff"/>
<rect x="984.63" y="616.33" width="13.98" height="64.88" fill="#006cff"/>
<rect x="998.31" y="616.33" width="13.98" height="64.88" fill="#0055ff"/>
<rect x="1011.98" y="616.33" width="13.98" height="64.88" fill="#0055ff"/>
<rect x="1025.66" y="616.33" width="13.98" height="64.88" fill="#0051ff"/>
<rect x="1039.34" y="616.33" width="13.98" height="64.88" fill="#0049ff"/>
<rect x="1053.01" y="616.33" width="13.98" height="64.88" fill="#0049ff"/>
<rect x="1066.69" y="616.33" width="13.98" height="64.88" fill="#003bff"/>
<rect x="1080.36" y="616.33" width="13.98" height="64.88" fill="#003bff"/>
<rect x="1094.04" y="616.33" width="13.98" height="64.88" fill="#0039ff"/>
<rect x="1107.72" y="616.33" width="13.98" height="64.88" fill="#0039ff"/>
<rect x="1121.39" y="616.33" width="13.98" height="64.88" fill="#0037ff"/>
<rect x="1135.07" y="616.33" width="13.98" height="64.88" fill="#0033ff"/>
<rect x="1148.75" y="616.33" width="13.98" height="64.88" fill="#0039ff"/>
<rect x="1162.42" y="616.33" width="13.98" height="64.88" fill="#003bff"/>
<rect x="711.10" y="680.92" width="13.98" height="64.88" fill="#e8ff00"/>
<rect x="724.78" y="680.92" width="13.98" height="64.88" fill="#ff1800"/>
<rect x="738.45" y="680.92" width="13.98" height="64.88" fill="#00ff70"/>
<rect x="752.13" y="680.92" width="13.98" height="64.88" fill="#00ff20"/>
<rect x="765.81" y="680.92" width="13.98" height="64.88" fill="#00ffff"/>
<rect x="779.48" y="680.92" width="13.98" height="64.88" fill="#00a8ff"/>
<rect x="793.16" y="680.92" width="13.98" height="64.88" fill="#00a8ff"/>
<rect x="806.84" y="680.92" width="13.98" height="64.88" fill="#00eeff"/>
<rect x="820.51" y="680.92" width="13.98" height="64.88" fill="#00ccff"/>
<rect x="834.19" y="680.92" width="13.98" height="64.88" fill="#00ccff"/>
<rect x="847.86" y="680.92" width="13.98" height="64.88" fill="#0094ff"/>
<rect x="861.54" y="680.92" width="13.98" height="64.88" fill="#0070ff"/>
<rect x="875.22" y="680.92" width="13.98" height="64.88" fill="#0064ff"/>
<rect x="888.89" y="680.92" width="13.98" height="64.88" fill="#0068ff"/>
<rect x="902.57" y="680.92" width="13.98" height="64.88" fill="#002aff"/>
<rect x="916.25" y="680.92" width="13.98" height="64.88" fill="#0028ff"/>
<rect x="929.92" y="680.92" width="13.98" height="64.88" fill="#002aff"/>
<rect x="943.60" y="680.92" width="13.98" height="64.88" fill="#002aff"/>
<rect x="957.28" y="680.92" width="13.98" height="64.88" fill="#006aff"/>
<rect x="970.95" y="680.92" width="13.98" height="64.88" fill="#006aff"/>
<rect x="984.63" y="680.92" width="13.98" height="64.88" fill="#006cff"/>
<rect x="998.31" y="680.92" width="13.98" height="64.88" fill="#0055ff"/>
<rect x="1011.98" y="680.92" width="13.98" height="64.88" fill="#0055ff"/>
<rect x="1025.66" y="680.92" width="13.98" height="64.88" fill="#0055ff"/>
<rect x="1039.34" y="680.92" width="13.98" height="64.88" fill="#0049ff"/>
<rect x="1053.01" y="680.92" width="13.98" height="64.88" fill="#0049ff"/>
<rect x="1066.69" y="680.92" width="13.98" height="64.88" fill="#003dff"/>
<rect x="1080.36" y="680.92" width="13.98" height="64.88" fill="#003dff"/>
<rect x="1094.04" y="680.92" width="13.98" height="64.88" fill="#0039ff"/>
<rect x="1107.72" y="680.92" width="13.98" height="64.88" fill="#0037ff"/>
<rect x="1121.39" y="680.92" width="13.98" height="64.88" fill="#0037ff"/>
<rect x="1135.07" y="680.92" width="13.98" height="64.88" fill="#0033ff"/>
<rect x="1148.75" y="680.92" width="13.98" height="64.88" fill="#003bff"/>
<rect x="1162.42" y="680.92" width="13.98" height="64.88" fill="#003bff"/>
</g>
<path d="M725.5 319.0 L725.5 234.4 L804.9 234.4 L804.9 298.1" fill="none" stroke="#000" stroke-width="1.6"/>
<path d="M718.5 354.6 L718.5 319.0 L732.7 319.0 L732.7 354.6" fill="none" stroke="#000" stroke-width="1.6"/>
<path d="M753.4 336.4 L753.4 298.1 L856.8 298.1 L856.8 326.2" fill="none" stroke="#000" stroke-width="1.6"/>
<path d="M746.4 354.6 L746.4 336.4 L760.3 336.4 L760.3 354.6" fill="none" stroke="#000" stroke-width="1.6"/>
<path d="M791.2 344.5 L791.2 326.2 L920.7 326.2 L920.7 339.6" fill="none" stroke="#000" stroke-width="1.6"/>
<path d="M773.7 354.6 L773.7 344.5 L809.7 344.5 L809.7 349.0" fill="none" stroke="#000" stroke-width="1.6"/>
<path d="M794.4 353.0 L794.4 349.0 L835.8 349.0 L835.8 353.0" fill="none" stroke="#000" stroke-width="1.6"/>
<path d="M787.2 353.3 L801.6 353.3" fill="none" stroke="#000" stroke-width="1.6"/>
<path d="M815.0 353.3 L843.0 353.3" fill="none" stroke="#000" stroke-width="1.6"/>
<path d="M815.0 349.2 L827.0 349.2" fill="none" stroke="#000" stroke-width="2.4"/>
<path d="M867.2 350.2 L867.2 339.6 L972.4 339.6 L972.4 345.5" fill="none" stroke="#000" stroke-width="1.6"/>
<path d="M854.5 354.6 L854.5 350.2 L878.0 350.2" fill="none" stroke="#000" stroke-width="1.6"/>
<path d="M868.0 353.3 L896.0 353.3" fill="none" stroke="#000" stroke-width="1.6"/>
<path d="M876.0 351.0 L890.0 351.6" fill="none" stroke="#000" stroke-width="2.4"/>
<path d="M921.6 353.0 L921.6 345.5 L1022.0 345.5 L1022.0 348.5" fill="none" stroke="#000" stroke-width="1.6"/>
<path d="M909.8 354.6 L909.8 353.3 L950.0 353.3" fill="none" stroke="#000" stroke-width="1.6"/>
<path d="M924.0 352.0 L936.0 352.6" fill="none" stroke="#000" stroke-width="2.2"/>
<path d="M976.0 353.3 L976.0 348.6 L1068.2 348.6 L1068.2 351.0" fill="none" stroke="#000" stroke-width="1.8"/>
<path d="M965.3 353.5 L993.7 353.5" fill="none" stroke="#000" stroke-width="1.6"/>
<path d="M1026.8 351.0 L1109.6 351.0" fill="none" stroke="#000" stroke-width="1.8"/>
<path d="M1004.3 353.5 L1060.0 353.5" fill="none" stroke="#000" stroke-width="1.6"/>
<path d="M1073.0 353.5 L1100.0 353.5" fill="none" stroke="#000" stroke-width="1.6"/>
<path d="M1083.5 352.2 L1102.5 352.2" fill="none" stroke="#000" stroke-width="2.6"/>
<path d="M1109.6 351.0 L1118.0 353.3 L1168.7 353.3" fill="none" stroke="#000" stroke-width="1.6"/>
<path d="M709.6 391.0 L687.4 391.0 L687.4 455.0 L709.6 455.0" fill="none" stroke="#000" stroke-width="1.6"/>
<path d="M709.6 518.6 L690.3 518.6 L690.3 584.0 L709.6 584.0" fill="none" stroke="#000" stroke-width="1.6"/>
<path d="M687.4 423.3 L671.1 423.3 L671.1 551.8 L690.3 551.8" fill="none" stroke="#000" stroke-width="1.6"/>
<path d="M709.6 648.7 L671.1 648.7 L671.1 712.6 L709.6 712.6" fill="none" stroke="#000" stroke-width="1.6"/>
<path d="M671.1 488.5 L600.1 488.5 L600.1 680.4 L671.1 680.4" fill="none" stroke="#000" stroke-width="1.6"/>
<text x="1182.3" y="394.2" font-family="Liberation Sans" fill="#111" stroke="#111" stroke-width="0.4" textLength="56" lengthAdjust="spacingAndGlyphs"><tspan font-size="10.7">F</tspan><tspan font-size="8.5">2</tspan><tspan font-size="8.5">7</tspan><tspan font-size="10.7">G</tspan><tspan font-size="8.5">1</tspan><tspan font-size="10.7">H</tspan><tspan font-size="10.7">N</tspan><tspan font-size="8.5">0</tspan><tspan font-size="8.5">2</tspan></text>
<text x="1182.3" y="458.8" font-family="Liberation Sans" fill="#111" stroke="#111" stroke-width="0.4" textLength="56" lengthAdjust="spacingAndGlyphs"><tspan font-size="10.7">F</tspan><tspan font-size="8.5">2</tspan><tspan font-size="8.5">7</tspan><tspan font-size="10.7">G</tspan><tspan font-size="8.5">1</tspan><tspan font-size="10.7">H</tspan><tspan font-size="10.7">N</tspan><tspan font-size="8.5">0</tspan><tspan font-size="8.5">1</tspan></text>
<text x="1182.3" y="523.4" font-family="Liberation Sans" fill="#111" stroke="#111" stroke-width="0.4" textLength="56" lengthAdjust="spacingAndGlyphs"><tspan font-size="10.7">F</tspan><tspan font-size="8.5">2</tspan><tspan font-size="8.5">5</tspan><tspan font-size="10.7">X</tspan><tspan font-size="10.7">G</tspan><tspan font-size="10.7">Y</tspan><tspan font-size="10.7">O</tspan><tspan font-size="8.5">0</tspan><tspan font-size="8.5">2</tspan></text>
<text x="1182.3" y="587.9" font-family="Liberation Sans" fill="#111" stroke="#111" stroke-width="0.4" textLength="56" lengthAdjust="spacingAndGlyphs"><tspan font-size="10.7">F</tspan><tspan font-size="8.5">2</tspan><tspan font-size="8.5">5</tspan><tspan font-size="10.7">X</tspan><tspan font-size="10.7">G</tspan><tspan font-size="10.7">Y</tspan><tspan font-size="10.7">O</tspan><tspan font-size="8.5">0</tspan><tspan font-size="8.5">1</tspan></text>
<text x="1182.3" y="652.5" font-family="Liberation Sans" fill="#111" stroke="#111" stroke-width="0.4" textLength="56" lengthAdjust="spacingAndGlyphs"><tspan font-size="10.7">F</tspan><tspan font-size="8.5">1</tspan><tspan font-size="10.7">W</tspan><tspan font-size="8.5">7</tspan><tspan font-size="8.5">1</tspan><tspan font-size="10.7">K</tspan><tspan font-size="10.7">A</tspan><tspan font-size="8.5">0</tspan><tspan font-size="8.5">1</tspan></text>
<text x="1182.3" y="717.1" font-family="Liberation Sans" fill="#111" stroke="#111" stroke-width="0.4" textLength="56" lengthAdjust="spacingAndGlyphs"><tspan font-size="10.7">F</tspan><tspan font-size="8.5">1</tspan><tspan font-size="8.5">6</tspan><tspan font-size="10.7">Z</tspan><tspan font-size="10.7">R</tspan><tspan font-size="10.7">B</tspan><tspan font-size="8.5">3</tspan><tspan font-size="8.5">0</tspan><tspan font-size="8.5">1</tspan></text>
<text transform="translate(720.2 749.5) rotate(-90)" x="0" y="0" text-anchor="end" font-family="Liberation Sans" font-weight="bold" font-size="6.1" fill="#000" stroke="#000" stroke-width="0.7" textLength="53.0" lengthAdjust="spacingAndGlyphs">Xanthomonadaceae</text>
<text transform="translate(733.9 749.5) rotate(-90)" x="0" y="0" text-anchor="end" font-family="Liberation Sans" font-weight="bold" font-size="6.1" fill="#000" stroke="#000" stroke-width="0.7" textLength="65.5" lengthAdjust="spacingAndGlyphs">Sphingomonadaceae</text>
<text transform="translate(747.6 749.5) rotate(-90)" x="0" y="0" text-anchor="end" font-family="Liberation Sans" font-weight="bold" font-size="6.1" fill="#000" stroke="#000" stroke-width="0.7" textLength="58.9" lengthAdjust="spacingAndGlyphs">Comamonadaceae</text>
<text transform="translate(761.3 749.5) rotate(-90)" x="0" y="0" text-anchor="end" font-family="Liberation Sans" font-weight="bold" font-size="6.1" fill="#000" stroke="#000" stroke-width="0.7" textLength="58.1" lengthAdjust="spacingAndGlyphs">Burkholderiaceae</text>
<text transform="translate(774.9 749.5) rotate(-90)" x="0" y="0" text-anchor="end" font-family="Liberation Sans" font-weight="bold" font-size="6.1" fill="#000" stroke="#000" stroke-width="0.7" textLength="59.5" lengthAdjust="spacingAndGlyphs">Flavobacteriaceae</text>
<text transform="translate(788.6 749.5) rotate(-90)" x="0" y="0" text-anchor="end" font-family="Liberation Sans" font-weight="bold" font-size="6.1" fill="#000" stroke="#000" stroke-width="0.7" textLength="60.5" lengthAdjust="spacingAndGlyphs">Staphylococcaceae</text>
<text transform="translate(802.3 749.5) rotate(-90)" x="0" y="0" text-anchor="end" font-family="Liberation Sans" font-weight="bold" font-size="6.1" fill="#000" stroke="#000" stroke-width="0.7" textLength="57.2" lengthAdjust="spacingAndGlyphs">Moraxellaceae</text>
<text transform="translate(816.0 749.5) rotate(-90)" x="0" y="0" text-anchor="end" font-family="Liberation Sans" font-weight="bold" font-size="6.1" fill="#000" stroke="#000" stroke-width="0.7" textLength="59.5" lengthAdjust="spacingAndGlyphs">Methylobacteriaceae</text>
<text transform="translate(829.6 749.5) rotate(-90)" x="0" y="0" text-anchor="end" font-family="Liberation Sans" font-weight="bold" font-size="6.1" fill="#000" stroke="#000" stroke-width="0.7" textLength="64.5" lengthAdjust="spacingAndGlyphs">Propionibacteriaceae</text>
<text transform="translate(843.3 749.5) rotate(-90)" x="0" y="0" text-anchor="end" font-family="Liberation Sans" font-weight="bold" font-size="6.1" fill="#000" stroke="#000" stroke-width="0.7" textLength="42.5" lengthAdjust="spacingAndGlyphs">Nocardiaceae</text>
<text transform="translate(857.0 749.5) rotate(-90)" x="0" y="0" text-anchor="end" font-family="Liberation Sans" font-weight="bold" font-size="6.1" fill="#000" stroke="#000" stroke-width="0.7" textLength="58.1" lengthAdjust="spacingAndGlyphs">Caulobacteraceae</text>
<text transform="translate(870.7 749.5) rotate(-90)" x="0" y="0" text-anchor="end" font-family="Liberation Sans" font-weight="bold" font-size="6.1" fill="#000" stroke="#000" stroke-width="0.7" textLength="56.5" lengthAdjust="spacingAndGlyphs">Rhizobiaceae</text>
<text transform="translate(884.4 749.5) rotate(-90)" x="0" y="0" text-anchor="end" font-family="Liberation Sans" font-weight="bold" font-size="6.1" fill="#000" stroke="#000" stroke-width="0.7" textLength="58.1" lengthAdjust="spacingAndGlyphs">Bradyrhizobiaceae</text>
<text transform="translate(898.0 749.5) rotate(-90)" x="0" y="0" text-anchor="end" font-family="Liberation Sans" font-weight="bold" font-size="6.1" fill="#000" stroke="#000" stroke-width="0.7" textLength="39.5" lengthAdjust="spacingAndGlyphs">Bacillaceae</text>
<text transform="translate(911.7 749.5) rotate(-90)" x="0" y="0" text-anchor="end" font-family="Liberation Sans" font-weight="bold" font-size="6.1" fill="#000" stroke="#000" stroke-width="0.7" textLength="58.1" lengthAdjust="spacingAndGlyphs">Enterococcaceae</text>
<text transform="translate(925.4 749.5) rotate(-90)" x="0" y="0" text-anchor="end" font-family="Liberation Sans" font-weight="bold" font-size="6.1" fill="#000" stroke="#000" stroke-width="0.7" textLength="37.5" lengthAdjust="spacingAndGlyphs">Listeriaceae</text>
<text transform="translate(939.1 749.5) rotate(-90)" x="0" y="0" text-anchor="end" font-family="Liberation Sans" font-weight="bold" font-size="6.1" fill="#000" stroke="#000" stroke-width="0.7" textLength="54.5" lengthAdjust="spacingAndGlyphs">Vibrionaceae</text>
<text transform="translate(952.7 749.5) rotate(-90)" x="0" y="0" text-anchor="end" font-family="Liberation Sans" font-weight="bold" font-size="6.1" fill="#000" stroke="#000" stroke-width="0.7" textLength="54.5" lengthAdjust="spacingAndGlyphs">Neisseriaceae</text>
<text transform="translate(966.4 749.5) rotate(-90)" x="0" y="0" text-anchor="end" font-family="Liberation Sans" font-weight="bold" font-size="6.1" fill="#000" stroke="#000" stroke-width="0.7" textLength="56.5" lengthAdjust="spacingAndGlyphs">Rhodobacteraceae</text>
<text transform="translate(980.1 749.5) rotate(-90)" x="0" y="0" text-anchor="end" font-family="Liberation Sans" font-weight="bold" font-size="6.1" fill="#000" stroke="#000" stroke-width="0.7" textLength="42.0" lengthAdjust="spacingAndGlyphs">Pasteurellaceae</text>
<text transform="translate(993.8 749.5) rotate(-90)" x="0" y="0" text-anchor="end" font-family="Liberation Sans" font-weight="bold" font-size="6.1" fill="#000" stroke="#000" stroke-width="0.7" textLength="51.5" lengthAdjust="spacingAndGlyphs">Micrococcaceae</text>
<text transform="translate(1007.4 749.5) rotate(-90)" x="0" y="0" text-anchor="end" font-family="Liberation Sans" font-weight="bold" font-size="6.1" fill="#000" stroke="#000" stroke-width="0.7" textLength="50.5" lengthAdjust="spacingAndGlyphs">Mycobacteriaceae</text>
<text transform="translate(1021.1 749.5) rotate(-90)" x="0" y="0" text-anchor="end" font-family="Liberation Sans" font-weight="bold" font-size="6.1" fill="#000" stroke="#000" stroke-width="0.7" textLength="66.5" lengthAdjust="spacingAndGlyphs">Corynebacteriaceae</text>
<text transform="translate(1034.8 749.5) rotate(-90)" x="0" y="0" text-anchor="end" font-family="Liberation Sans" font-weight="bold" font-size="6.1" fill="#000" stroke="#000" stroke-width="0.7" textLength="68.2" lengthAdjust="spacingAndGlyphs">Acetobacteraceae</text>
<text transform="translate(1048.5 749.5) rotate(-90)" x="0" y="0" text-anchor="end" font-family="Liberation Sans" font-weight="bold" font-size="6.1" fill="#000" stroke="#000" stroke-width="0.7" textLength="61.5" lengthAdjust="spacingAndGlyphs">Streptococcaceae</text>
<text transform="translate(1062.1 749.5) rotate(-90)" x="0" y="0" text-anchor="end" font-family="Liberation Sans" font-weight="bold" font-size="6.1" fill="#000" stroke="#000" stroke-width="0.7" textLength="63.1" lengthAdjust="spacingAndGlyphs">Lactobacillaceae</text>
<text transform="translate(1075.8 749.5) rotate(-90)" x="0" y="0" text-anchor="end" font-family="Liberation Sans" font-weight="bold" font-size="6.1" fill="#000" stroke="#000" stroke-width="0.7" textLength="48.5" lengthAdjust="spacingAndGlyphs">Clostridiaceae</text>
<text transform="translate(1089.5 749.5) rotate(-90)" x="0" y="0" text-anchor="end" font-family="Liberation Sans" font-weight="bold" font-size="6.1" fill="#000" stroke="#000" stroke-width="0.7" textLength="63.1" lengthAdjust="spacingAndGlyphs">Leuconostocaceae</text>
<text transform="translate(1103.2 749.5) rotate(-90)" x="0" y="0" text-anchor="end" font-family="Liberation Sans" font-weight="bold" font-size="6.1" fill="#000" stroke="#000" stroke-width="0.7" textLength="41.2" lengthAdjust="spacingAndGlyphs">Alcaligenaceae</text>
<text transform="translate(1116.9 749.5) rotate(-90)" x="0" y="0" text-anchor="end" font-family="Liberation Sans" font-weight="bold" font-size="6.1" fill="#000" stroke="#000" stroke-width="0.7" textLength="49.5" lengthAdjust="spacingAndGlyphs">Lachnospiraceae</text>
<text transform="translate(1130.5 749.5) rotate(-90)" x="0" y="0" text-anchor="end" font-family="Liberation Sans" font-weight="bold" font-size="6.1" fill="#000" stroke="#000" stroke-width="0.7" textLength="51.5" lengthAdjust="spacingAndGlyphs">Oxalobacteraceae</text>
<text transform="translate(1144.2 749.5) rotate(-90)" x="0" y="0" text-anchor="end" font-family="Liberation Sans" font-weight="bold" font-size="6.1" fill="#000" stroke="#000" stroke-width="0.7" textLength="59.5" lengthAdjust="spacingAndGlyphs">Enterobacteriaceae</text>
<text transform="translate(1157.9 749.5) rotate(-90)" x="0" y="0" text-anchor="end" font-family="Liberation Sans" font-weight="bold" font-size="6.1" fill="#000" stroke="#000" stroke-width="0.7" textLength="59.5" lengthAdjust="spacingAndGlyphs">Pseudomonadaceae</text>
<text transform="translate(1171.6 749.5) rotate(-90)" x="0" y="0" text-anchor="end" font-family="Liberation Sans" font-weight="bold" font-size="6.1" fill="#000" stroke="#000" stroke-width="0.7" textLength="50.5" lengthAdjust="spacingAndGlyphs">Aeromonadaceae</text>
<text x="803.6" y="230.2" font-family="Liberation Sans" font-weight="bold" font-size="18" fill="#000" stroke="#000" stroke-width="0.25" textLength="283" lengthAdjust="spacingAndGlyphs">Heatmap (BlastTaxonomy family)</text>
</g></svg>
</div></div></div></body></html>
